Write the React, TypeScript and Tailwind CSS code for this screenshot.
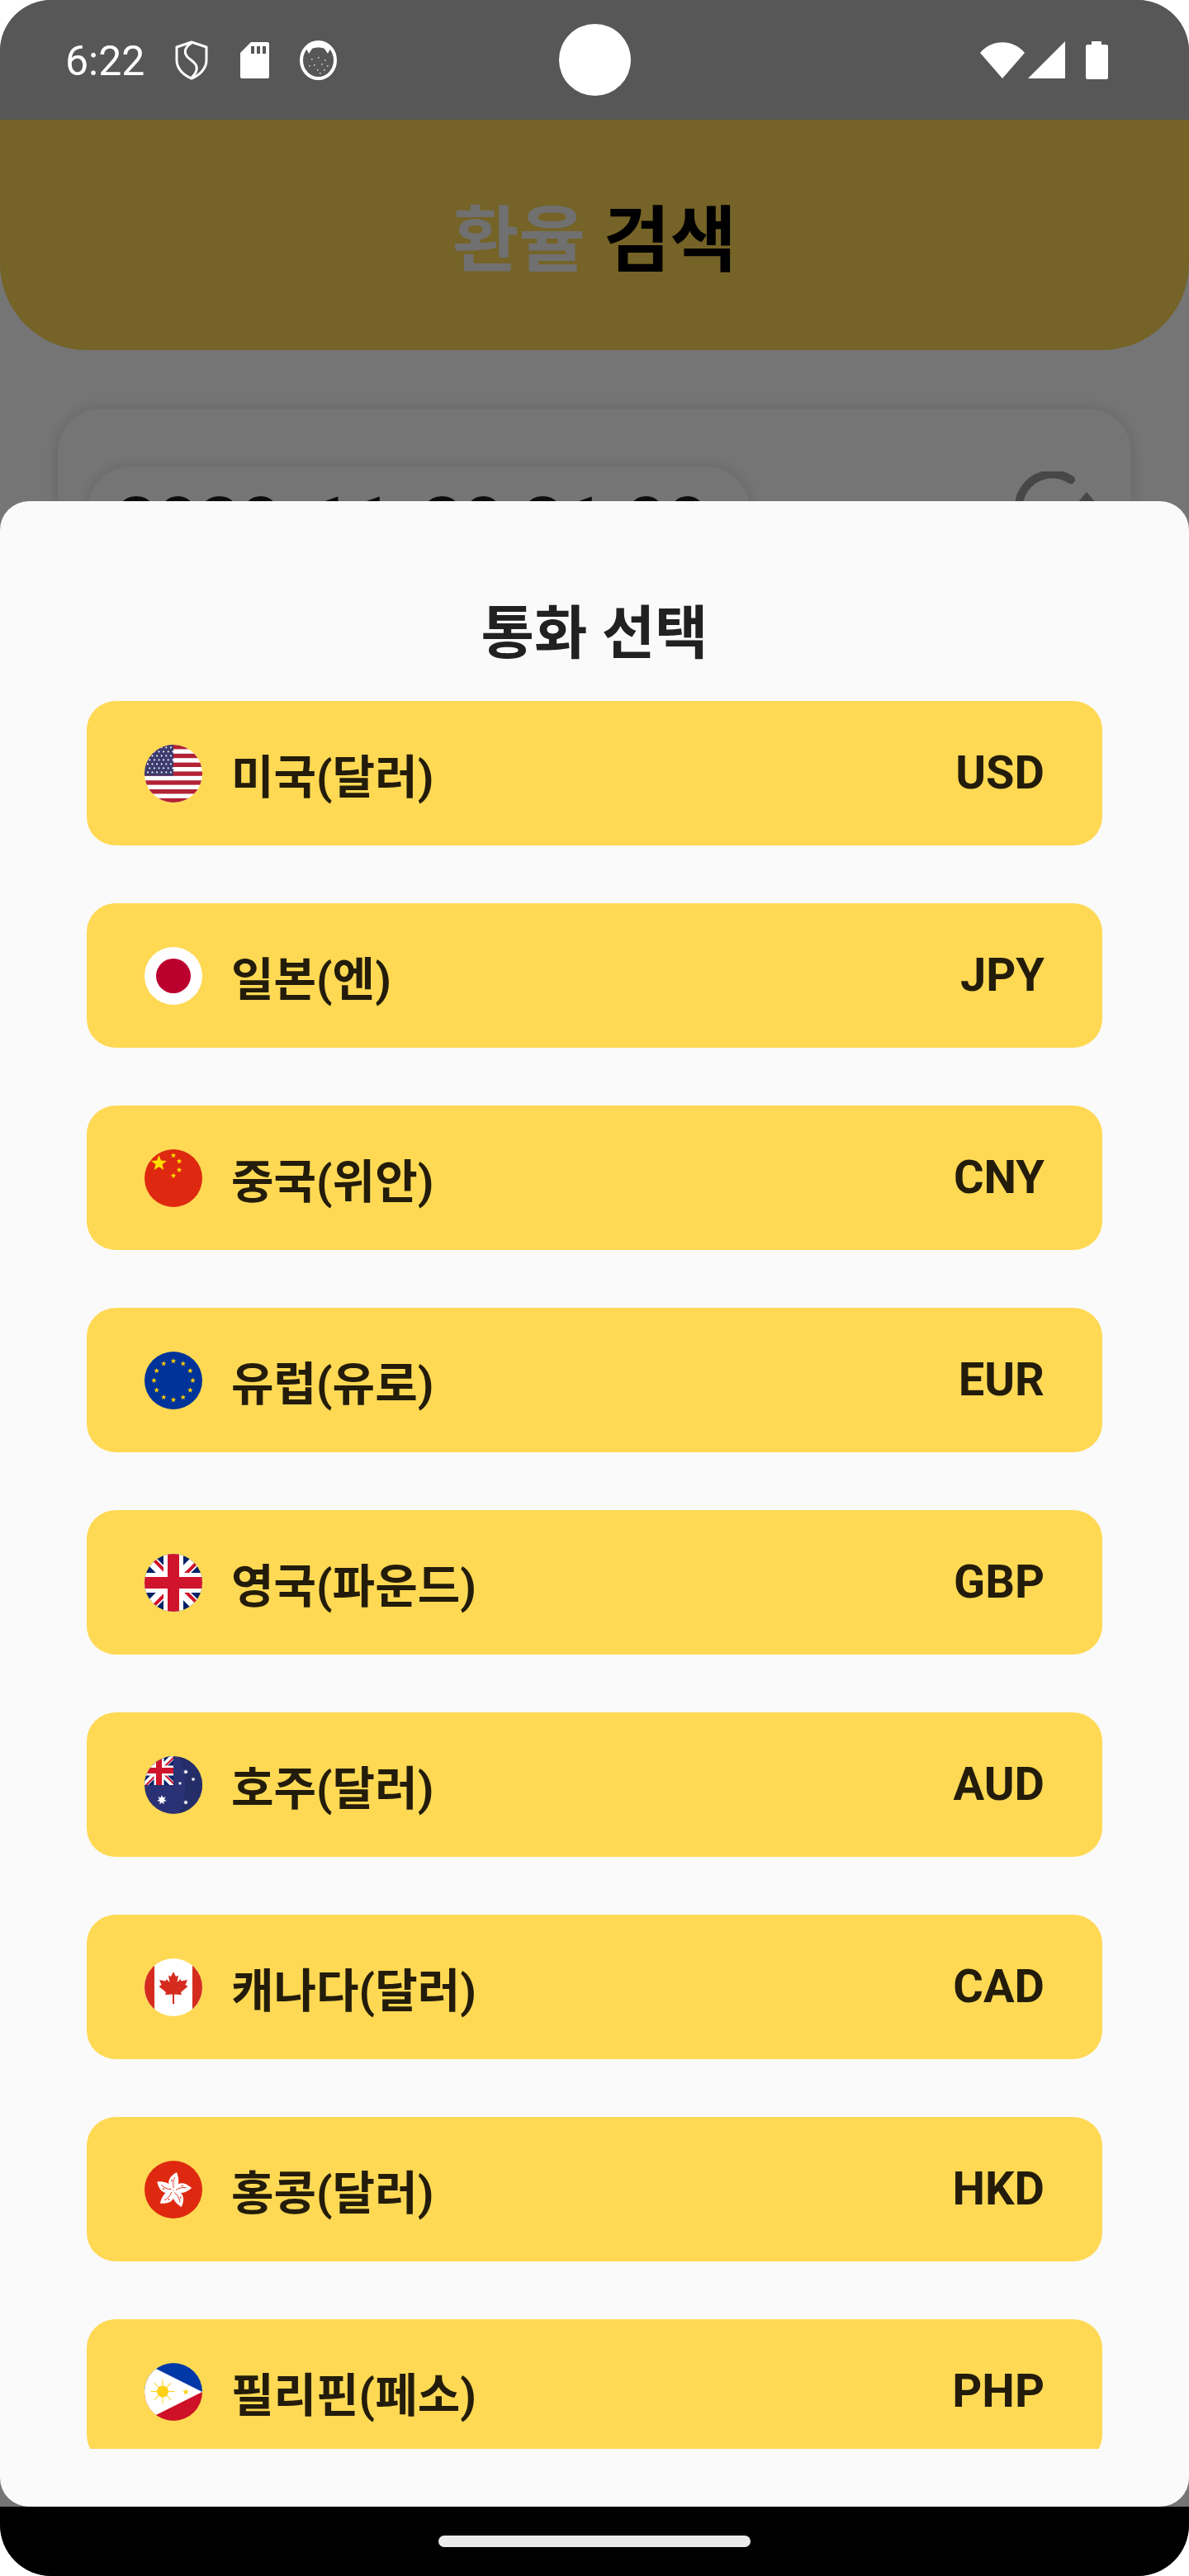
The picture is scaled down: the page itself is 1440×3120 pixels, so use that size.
const CURRENCIES = [
  { name: '미국(달러)', code: 'USD', flag: 'us' },
  { name: '일본(엔)', code: 'JPY', flag: 'jp' },
  { name: '중국(위안)', code: 'CNY', flag: 'cn' },
  { name: '유럽(유로)', code: 'EUR', flag: 'eu' },
  { name: '영국(파운드)', code: 'GBP', flag: 'gb' },
  { name: '호주(달러)', code: 'AUD', flag: 'au' },
  { name: '캐나다(달러)', code: 'CAD', flag: 'ca' },
  { name: '홍콩(달러)', code: 'HKD', flag: 'hk' },
  { name: '필리핀(페소)', code: 'PHP', flag: 'ph' },
];

function Star({ x, y, r, fill = '#fff', n = 5 }: { x: number; y: number; r: number; fill?: string; n?: number }) {
  const pts: string[] = [];
  for (let i = 0; i < n * 2; i++) {
    const rad = i % 2 === 0 ? r : r * (n === 5 ? 0.42 : 0.5);
    const a = (Math.PI * i) / n - Math.PI / 2;
    pts.push(`${x + rad * Math.cos(a)},${y + rad * Math.sin(a)}`);
  }
  return <polygon points={pts.join(' ')} fill={fill} />;
}

function UnionJack() {
  return (
    <>
      <rect width="70" height="70" fill="#012169" />
      <path d="M0 0L70 70M70 0L0 70" stroke="#fff" strokeWidth="13" />
      <path d="M0 0L35 35M70 70L35 35" stroke="#cf142b" strokeWidth="4" transform="translate(2 -2)" />
      <path d="M70 0L35 35M0 70L35 35" stroke="#cf142b" strokeWidth="4" transform="translate(2 2)" />
      <rect x="23" width="24" height="70" fill="#fff" />
      <rect y="23" width="70" height="24" fill="#fff" />
      <rect x="28" width="14" height="70" fill="#cf142b" />
      <rect y="28" width="70" height="14" fill="#cf142b" />
    </>
  );
}

function Flag({ code }: { code: string }) {
  let body = null;
  if (code === 'us') {
    const stars = [];
    for (let r = 0; r < 7; r++) {
      for (let c = 0; c < 6; c++) {
        stars.push(<rect key={`${r}-${c}`} x={3 + c * 5.6 + (r % 2) * 2.4} y={2.5 + r * 5} width="1.8" height="1.8" fill="#fff" />);
      }
    }
    body = (
      <>
        <rect width="70" height="70" fill="#fff" />
        {[0, 2, 4, 6, 8, 10, 12].map((i) => (
          <rect key={i} y={i * 5.4} width="70" height="5.4" fill="#b22234" />
        ))}
        <rect width="35" height="37.6" fill="#3c3b6e" />
        {stars}
      </>
    );
  } else if (code === 'jp') {
    body = (
      <>
        <rect width="70" height="70" fill="#fff" />
        <circle cx="35" cy="35" r="21" fill="#bc002d" />
      </>
    );
  } else if (code === 'cn') {
    body = (
      <>
        <rect width="70" height="70" fill="#de2910" />
        <Star x={17.5} y={17} r={10} fill="#ffde00" />
        <Star x={35} y={7.5} r={3.4} fill="#ffde00" />
        <Star x={42} y={14.5} r={3.4} fill="#ffde00" />
        <Star x={42} y={25} r={3.4} fill="#ffde00" />
        <Star x={35} y={32} r={3.4} fill="#ffde00" />
      </>
    );
  } else if (code === 'eu') {
    body = (
      <>
        <rect width="70" height="70" fill="#003399" />
        {Array.from({ length: 12 }, (_, i) => {
          const a = (i * Math.PI) / 6;
          return <Star key={i} x={35 + 23.5 * Math.sin(a)} y={35 - 23.5 * Math.cos(a)} r={3.4} fill="#ffcc00" />;
        })}
      </>
    );
  } else if (code === 'gb') {
    body = <UnionJack />;
  } else if (code === 'au') {
    body = (
      <>
        <rect width="70" height="70" fill="#2b3175" />
        <path d="M42 0C52 20 52 50 42 70H70V0Z" fill="#252d69" />
        <svg x="0" y="0" width="35" height="35" viewBox="0 0 70 70">
          <UnionJack />
        </svg>
        <Star x={21} y={53} r={6} n={7} />
        <Star x={50} y={19} r={3} n={7} />
        <Star x={59} y={28} r={2.6} n={7} />
        <Star x={43} y={33} r={2.6} n={5} />
        <Star x={50} y={56} r={3} n={7} />
      </>
    );
  } else if (code === 'ca') {
    body = (
      <>
        <rect width="70" height="70" fill="#fff" />
        <rect width="12" height="70" fill="#d52b1e" />
        <rect x="58" width="12" height="70" fill="#d52b1e" />
        <path
          d="M35 16L32 22L29 20.5L30.5 29L26.5 25L25.5 27.5L18 26L20.5 32L17.5 34L26 41L25 44L34 43.5V55H36V43.5L45 44L44 41L52.5 34L49.5 32L52 26L44.5 27.5L43.5 25L39.5 29L41 20.5L38 22Z"
          fill="#d52b1e"
        />
      </>
    );
  } else if (code === 'hk') {
    body = (
      <>
        <rect width="70" height="70" fill="#de2910" />
        {[0, 72, 144, 216, 288].map((deg) => (
          <g key={deg} transform={`rotate(${deg} 35 36)`}>
            <path d="M36 36C28 32 25 22 39 14C42 22 43 29 36 36Z" fill="#fff" />
            <path d="M35.5 33C34 28 35 23 37 20" stroke="#de2910" strokeWidth="0.9" fill="none" />
            <circle cx="33" cy="24" r="0.9" fill="#de2910" />
          </g>
        ))}
      </>
    );
  } else if (code === 'ph') {
    body = (
      <>
        <rect width="70" height="35" fill="#0038a8" />
        <rect y="35" width="70" height="35" fill="#ce1126" />
        <polygon points="0,0 70,35 0,70" fill="#fff" />
        <circle cx="22" cy="34.5" r="7" fill="#fcd116" />
        {[0, 45, 90, 135, 180, 225, 270, 315].map((deg) => (
          <rect key={deg} x="21.5" y="20" width="1" height="8" fill="#fcd116" transform={`rotate(${deg} 22 34.5)`} />
        ))}
        <Star x={50} y={35} r={4} fill="#fcd116" />
      </>
    );
  }
  return (
    <div className="w-[70px] h-[70px] rounded-full overflow-hidden shrink-0">
      <svg width="70" height="70" viewBox="0 0 70 70" className="block">
        {body}
      </svg>
    </div>
  );
}

function StatusBar() {
  return (
    <div className="relative h-[145px] shrink-0 bg-[#575757] flex items-center justify-between pl-[79px] pr-[98px]">
      <div className="flex items-center">
        <span className="text-[50px] leading-none text-white w-[133px] mt-[2px]">6:22</span>
        <svg width="40" height="48" viewBox="0 0 40 48" className="mr-[39px]" fill="none" stroke="#fff">
          <path d="M20 2L38 8V24C38 34 30 42 20 46C10 42 2 34 2 24V8Z" strokeWidth="3" strokeLinejoin="round" />
          <path d="M20 3C12 8 10 14 15 20C20 25 28 28 26 36C25 40 22 43 20 45" strokeWidth="3" />
        </svg>
        <svg width="35" height="44" viewBox="0 0 35 44" className="mr-[37px]">
          <path d="M13 0H33C34 0 35 1 35 2V42C35 43 34 44 33 44H2C1 44 0 43 0 42V13Z" fill="#fff" />
          <rect x="13" y="5" width="4" height="9" fill="#575757" />
          <rect x="20" y="5" width="4" height="9" fill="#575757" />
          <rect x="27" y="5" width="4" height="9" fill="#575757" />
        </svg>
        <svg width="45" height="48" viewBox="0 0 45 48">
          <ellipse cx="22.5" cy="24" rx="20.5" ry="22" fill="#575757" stroke="#fff" strokeWidth="4" />
          <path d="M7 8C14 1 31 1 38 8L34 16L30 10C26 8 19 8 15 10L11 16Z" fill="#fff" />
          {[[14, 22], [22, 20], [30, 23], [17, 29], [26, 28], [33, 30], [11, 30], [21, 35], [29, 35], [24, 39]].map(([x, y]) => (
            <rect key={`${x}-${y}`} x={x} y={y} width="1.6" height="1.6" fill="#d0d0d0" />
          ))}
        </svg>
      </div>
      <div className="absolute left-[677px] top-[29px] w-[87px] h-[87px] rounded-full bg-white" />
      <div className="flex items-center">
        <svg width="54" height="44" viewBox="0 0 54 44" className="mr-[4px]">
          <path d="M0 13C14 -4 40 -4 54 13L27 44Z" fill="#fff" />
        </svg>
        <svg width="45" height="45" viewBox="0 0 45 45" className="mr-[25px]">
          <polygon points="45,0 45,45 0,45" fill="#fff" />
        </svg>
        <svg width="27" height="46" viewBox="0 0 27 46">
          <path d="M7 0H19V4H25C26 4 27 5 27 6V44C27 45 26 46 25 46H2C1 46 0 45 0 44V6C0 5 1 4 2 4H7Z" fill="#fff" />
        </svg>
      </div>
    </div>
  );
}

export default function App() {
  return (
    <div className="relative w-[1440px] h-[3120px] rounded-[62px] overflow-hidden flex flex-col bg-[#757575] font-[family-name:Roboto,'Noto_Sans_CJK_KR',sans-serif]">
      <StatusBar />

      <div className="h-[279px] shrink-0 bg-[#756327] rounded-b-[105px] flex items-center justify-center pt-[16px] text-[87.5px] font-bold leading-none">
        <span className="text-[#707070]">환율</span>
        <span className="text-black ml-[22px]">검색</span>
      </div>

      <div className="mx-[70px] mt-[71px] h-[900px] rounded-[52px] bg-[#757575] shadow-[0_0_16px_rgba(0,0,0,0.14)] flex justify-between pl-[36px] pr-[30px] pt-[70px]">
        <div className="w-[802px] h-[175px] rounded-[52px] bg-[#757575] shadow-[0_0_16px_rgba(0,0,0,0.14)] pl-[34px] pt-[26px] text-[87.5px] font-bold leading-none text-[#0d0d0d]">
          2020-11-20 21:00
        </div>
        <svg width="110" height="90" viewBox="0 0 110 90" fill="none" className="mt-[6px]">
          <path d="M67 10A39 39 0 1 0 22 78" stroke="#474747" strokeWidth="10" strokeLinecap="round" />
          <polygon points="86,25 68,46 104,46" fill="#474747" />
        </svg>
      </div>

      <div className="absolute left-0 right-0 top-[607px] bottom-[84px] z-10 rounded-[35px] bg-[#fafafa] flex flex-col">
        <div className="h-[242px] shrink-0 pt-[122px] text-center text-[70px] font-bold leading-[78px] text-[#212121]">통화 선택</div>
        <div className="mx-[105px] mb-[70px] flex-1 overflow-hidden flex flex-col gap-[70px]">
          {CURRENCIES.map((c) => (
            <div key={c.code} className="h-[175px] shrink-0 rounded-[35px] bg-[#ffd954] px-[70px] flex items-center justify-between text-[#231c0a]">
              <div className="flex items-center">
                <Flag code={c.flag} />
                <span className="ml-[35px] mt-[10px] text-[56px] font-bold leading-none">{c.name}</span>
              </div>
              <span className="text-[56px] font-bold leading-none -mt-[2px]">{c.code}</span>
            </div>
          ))}
        </div>
      </div>

      <div className="absolute left-0 right-0 bottom-0 h-[84px] z-20 bg-black flex justify-center pt-[35px]">
        <div className="w-[378px] h-[14px] rounded-full bg-[#ebebeb]" />
      </div>
    </div>
  );
}
